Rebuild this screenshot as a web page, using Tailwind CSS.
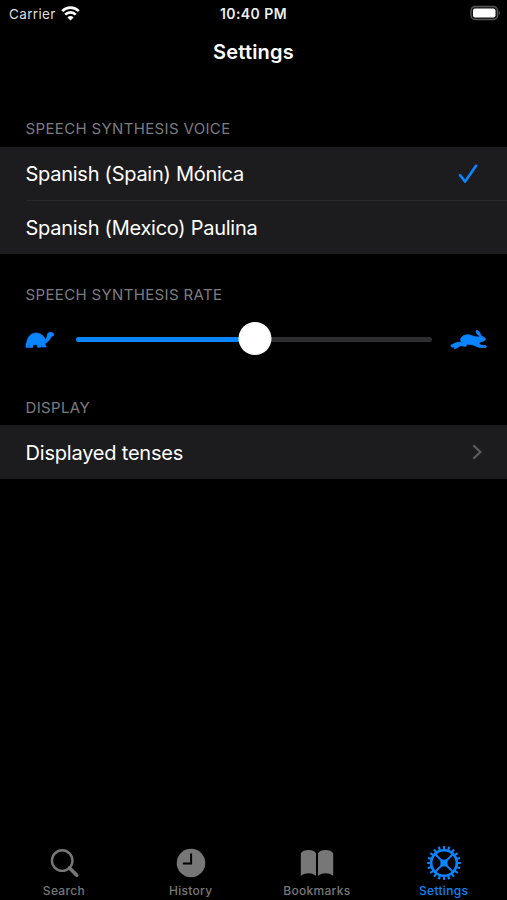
<!DOCTYPE html>
<html lang="en">
<head>
<meta charset="utf-8">
<title>Settings</title>
<script src="https://cdn.jsdelivr.net/npm/@tailwindcss/browser@4"></script>
</head>
<body class="bg-black">
<div class="flex h-[900px] w-[507px] flex-col overflow-hidden bg-black font-['Inter','Liberation_Sans',sans-serif] text-white">
  <header class="h-[80px] shrink-0">
    <div class="grid h-7 grid-cols-3 items-center pl-[9px] pr-[6px]">
      <div class="flex items-center gap-[5px] text-[13.5px] tracking-[0.35px] text-[#dedede]"><span>Carrier</span>
        <svg class="-mt-[2px] h-[15px] w-[19px]" viewBox="0 0 19 15" fill="none" stroke="#fff" stroke-width="2.7"><path d="M1.2 5.1A11.8 11.8 0 0 1 17.8 5.1"/><path d="M4.2 8.6A7.5 7.5 0 0 1 14.8 8.6"/><path d="M9.5 14.6L6.4 11.4Q9.5 8.8 12.6 11.4Z" fill="#fff" stroke="none"/></svg>
      </div>
      <div class="-ml-[3px] -mt-px whitespace-nowrap text-center text-[14px] font-semibold tracking-[0.45px] text-[#eee]">10:40 PM</div>
      <svg class="h-[16px] w-[31px] -mt-[2px] justify-self-end" viewBox="0 0 31 16"><rect x="1" y="1.5" width="26.5" height="13" rx="4" fill="#111" stroke="#555" stroke-width="1.4"/><rect x="3" y="3.5" width="22.5" height="9" rx="2" fill="#fff"/><path d="M28.8 5.6Q31 8 28.8 10.4Z" fill="#555"/></svg>
    </div>
    <h1 class="flex h-12 items-center justify-center text-[20px] font-semibold tracking-[0.2px]">Settings</h1>
  </header>
  <main class="flex-1">
    <h2 class="flex h-[67px] items-end pb-[8px] pl-[25.5px] text-[15px] leading-5 tracking-[0.35px] text-[#7c7c80]"><span>SPEECH SYNTHESIS VOICE</span></h2>
    <section class="bg-[#1c1c1e] text-[20px] tracking-[-0.26px]">
      <div class="flex h-[53px] items-center justify-between pl-[25.5px] pr-[29px] pt-px"><span>Spanish (Spain) Mónica</span>
        <svg class="h-5 w-5" viewBox="0 0 20 20" fill="none" stroke="#0a84ff" stroke-width="2.6" stroke-linecap="round" stroke-linejoin="round"><path d="M2 11.2L7.2 17.6L18 1.8"/></svg>
      </div>
      <div class="ml-[25.5px] flex h-[54px] items-center border-t border-[#29292b]"><span>Spanish (Mexico) Paulina</span></div>
    </section>
    <h2 class="flex h-[59px] items-end pb-[8px] pl-[25.5px] text-[15px] leading-5 tracking-[0.35px] text-[#7c7c80]"><span>SPEECH SYNTHESIS RATE</span></h2>
    <div class="flex h-[51px] items-center pl-[25px] pr-[19px] pt-[2px]">
      <svg class="h-[18px] w-[30px] shrink-0" viewBox="0 0 30 18" fill="#0a84ff" stroke="#0a84ff" stroke-width=".7" stroke-linejoin="round"><path d="M1.8 11.5C2.2 6 6 2.2 11 2C16 2 19 5.5 20.5 8.6C22 7.6 22 5.5 22.4 3.5C22.8 1.1 26.9.5 28.4 2.6C29.3 4.1 28.6 5.3 26.3 5.6C24.8 8.9 23 11.3 20 12.5L20.2 14L21.3 16H17.2L16 13.9L16 16.2H12.6L12 13.7H8.2L7.6 16.4H4L4.3 13.7L3.4 13.7L3.7 16.4H1L1 12.6Z"/></svg>
      <div class="relative ml-[21px] mr-[19px] h-[5px] flex-1 rounded-full bg-[#2e2e31]">
        <div class="h-full w-1/2 rounded-full bg-[#0a84ff]"></div>
        <div class="absolute left-[50.2%] top-1/2 h-[33px] w-[33px] -translate-x-1/2 -translate-y-[18px] rounded-full bg-white"></div>
      </div>
      <svg class="h-[20px] w-[37px] shrink-0 -translate-x-px" viewBox="0 0 37 20" fill="#0a84ff" stroke="#0a84ff" stroke-width=".8" stroke-linejoin="round"><path d="M30.2 6.4C27.2 4.6 25.6 2.4 26.2.5C28.9.3 30.2 3 30.9 5.6L32 6.5C34 7 35.5 8.1 35.4 9.6C34.8 11.3 32.6 11.5 31 11.5L28.8 13.4L31.1 15.3L35.6 15.5Q37 16.2 36.1 17.4H29.4L23.4 15L17 14.1L15.8 16.4L10.5 15.7L5.3 18.8Q3.6 18.9 4.2 17.5L5.2 16.4L2 17.2Q.4 16.6 1 15.1L6.8 12.4L10.9 12L11.5 11.2L10.2 9.9L11.6 7.2C15 3.8 19.2 4.6 22.6 5.9C25.4 6.8 28 7.4 30.2 6.4Z"/></svg>
    </div>
    <h2 class="flex h-[61px] items-end pb-[7px] pl-[25.5px] text-[15px] leading-5 tracking-[0.35px] text-[#7c7c80]"><span>DISPLAY</span></h2>
    <section class="flex h-[54px] items-center justify-between bg-[#1c1c1e] pl-[25.5px] pr-[24px] text-[20px] tracking-[-0.2px]"><span class="pt-px">Displayed tenses</span>
      <svg class="h-4 w-3" viewBox="0 0 12 16" fill="none" stroke="#5c5c60" stroke-width="2.2"><path d="M2.3 1.3L9.4 8L2.3 14.7"/></svg>
    </section>
  </main>
  <nav class="grid h-[58px] shrink-0 grid-cols-4 text-[12px] font-medium tracking-[0.3px] text-[#777]">
    <div class="flex flex-col items-center pl-px"><svg class="h-[42px] w-9" viewBox="0 0 36 42" fill="none" stroke="currentColor"><circle cx="16.2" cy="18.6" r="10.3" stroke-width="2.4"/><path d="M23.5 26L30.8 33.3" stroke-width="3.6" stroke-linecap="round"/></svg><span class="leading-[14px]">Search</span></div>
    <div class="flex flex-col items-center pl-px"><svg class="h-[42px] w-9" viewBox="0 0 36 42"><circle cx="18" cy="21" r="14.3" fill="currentColor"/><path d="M18.1 11.5V21.6H10" fill="none" stroke="#000" stroke-width="2"/></svg><span class="leading-[14px]">History</span></div>
    <div class="flex flex-col items-center"><svg class="h-[42px] w-9" viewBox="0 0 36 42" fill="currentColor"><path d="M1.8 11.4Q4 8.1 9.6 8.1Q15 8.1 17 11.3V33.7Q9.5 28.8 1.8 33.7ZM19 11.3Q21 8.1 26.5 8.1Q32 8.1 34.2 11.4V33.7Q26.5 28.8 19 33.7Z"/></svg><span class="leading-[14px]">Bookmarks</span></div>
    <div class="flex flex-col items-center text-[#0a84ff]"><svg class="h-[42px] w-9" viewBox="0 0 36 42" fill="none" stroke="currentColor"><circle cx="18" cy="21" r="12.8" stroke-width="2.6"/><circle cx="18" cy="21" r="15.2" stroke-width="3.4" pathLength="200" stroke-dasharray="4.4 5.6" stroke-dashoffset="2.2"/><path d="M9 12L27 30M27 12L9 30" stroke-width="1.8"/><rect x="14.4" y="17.4" width="7.2" height="7.2" rx="1" fill="currentColor" stroke="none"/></svg><span class="leading-[14px]">Settings</span></div>
  </nav>
</div>
</body>
</html>
